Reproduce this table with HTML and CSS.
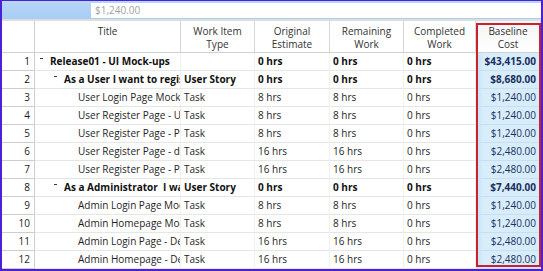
FILE: index.html
```html
<!DOCTYPE html>
<html lang="en">
  <head>
    <meta charset="UTF-8" />
    <title>Baseline Cost</title>
    <link rel="stylesheet" href="styles.css">
  </head>
  <body>
    <div class="sheet">
      <div class="toolbar">
        <div class="formula">$1,240.00</div>
      </div>

      <div class="grid">
        <div class="row head">
          <div class="cell num"></div>
          <div class="cell">Title</div>
          <div class="cell">Work Item<br />Type</div>
          <div class="cell">Original<br />Estimate</div>
          <div class="cell">Remaining<br />Work</div>
          <div class="cell">Completed<br />Work</div>
          <div class="cell cost">Baseline<br />Cost</div>
        </div>

        <div class="row bold">
          <div class="cell num">1</div>
          <div class="cell title lvl1"><span class="toggle"></span>Release01 - UI Mock-ups</div>
          <div class="cell"></div>
          <div class="cell">0 hrs</div>
          <div class="cell">0 hrs</div>
          <div class="cell">0 hrs</div>
          <div class="cell cost">$43,415.00</div>
        </div>
        <div class="row bold">
          <div class="cell num">2</div>
          <div class="cell title lvl2"><span class="toggle"></span>As a User I want to register</div>
          <div class="cell">User Story</div>
          <div class="cell">0 hrs</div>
          <div class="cell">0 hrs</div>
          <div class="cell">0 hrs</div>
          <div class="cell cost">$8,680.00</div>
        </div>
        <div class="row">
          <div class="cell num">3</div>
          <div class="cell title lvl3">User Login Page Mock-up</div>
          <div class="cell">Task</div>
          <div class="cell">8 hrs</div>
          <div class="cell">8 hrs</div>
          <div class="cell">0 hrs</div>
          <div class="cell cost">$1,240.00</div>
        </div>
        <div class="row">
          <div class="cell num">4</div>
          <div class="cell title lvl3">User Register Page - User form</div>
          <div class="cell">Task</div>
          <div class="cell">8 hrs</div>
          <div class="cell">8 hrs</div>
          <div class="cell">0 hrs</div>
          <div class="cell cost">$1,240.00</div>
        </div>
        <div class="row">
          <div class="cell num">5</div>
          <div class="cell title lvl3">User Register Page - Profile</div>
          <div class="cell">Task</div>
          <div class="cell">8 hrs</div>
          <div class="cell">8 hrs</div>
          <div class="cell">0 hrs</div>
          <div class="cell cost">$1,240.00</div>
        </div>
        <div class="row">
          <div class="cell num">6</div>
          <div class="cell title lvl3">User Register Page - data</div>
          <div class="cell">Task</div>
          <div class="cell">16 hrs</div>
          <div class="cell">16 hrs</div>
          <div class="cell">0 hrs</div>
          <div class="cell cost">$2,480.00</div>
        </div>
        <div class="row">
          <div class="cell num">7</div>
          <div class="cell title lvl3">User Register Page - Preview</div>
          <div class="cell">Task</div>
          <div class="cell">16 hrs</div>
          <div class="cell">16 hrs</div>
          <div class="cell">0 hrs</div>
          <div class="cell cost">$2,480.00</div>
        </div>
        <div class="row bold">
          <div class="cell num">8</div>
          <div class="cell title lvl2"><span class="toggle"></span>As a Administrator&nbsp; I want</div>
          <div class="cell">User Story</div>
          <div class="cell">0 hrs</div>
          <div class="cell">0 hrs</div>
          <div class="cell">0 hrs</div>
          <div class="cell cost">$7,440.00</div>
        </div>
        <div class="row">
          <div class="cell num">9</div>
          <div class="cell title lvl3">Admin Login Page Mock-up</div>
          <div class="cell">Task</div>
          <div class="cell">8 hrs</div>
          <div class="cell">8 hrs</div>
          <div class="cell">0 hrs</div>
          <div class="cell cost">$1,240.00</div>
        </div>
        <div class="row">
          <div class="cell num">10</div>
          <div class="cell title lvl3">Admin Homepage Mock-up</div>
          <div class="cell">Task</div>
          <div class="cell">8 hrs</div>
          <div class="cell">8 hrs</div>
          <div class="cell">0 hrs</div>
          <div class="cell cost">$1,240.00</div>
        </div>
        <div class="row">
          <div class="cell num">11</div>
          <div class="cell title lvl3">Admin Login Page - Design</div>
          <div class="cell">Task</div>
          <div class="cell">16 hrs</div>
          <div class="cell">16 hrs</div>
          <div class="cell">0 hrs</div>
          <div class="cell cost">$2,480.00</div>
        </div>
        <div class="row">
          <div class="cell num">12</div>
          <div class="cell title lvl3">Admin Homepage - Design</div>
          <div class="cell">Task</div>
          <div class="cell">16 hrs</div>
          <div class="cell">16 hrs</div>
          <div class="cell">0 hrs</div>
          <div class="cell cost">$2,480.00</div>
        </div>

        <!-- red highlight round the Baseline Cost column -->
        <div class="highlight"></div>
      </div>
    </div>
  </body>
</html>
```

FILE: styles.css
```css
body {
  margin: 0;
  font-family: "Open Sans", "DejaVu Sans", sans-serif;
  font-size: 10px;
  color: #1e1e1e;
  background: #ffffff;
}

.sheet {
  width: 543px;
  height: 271px;
  box-sizing: border-box;
  border: 2px solid #4a22d6;
  border-top-width: 1px;
  overflow: hidden;
  display: flex;
  flex-direction: column;
}

.toolbar {
  height: 18px;
  background: linear-gradient(#b7d6f7, #a8ccf4);
  border-bottom: 2px solid #dedede;
  display: flex;
  align-items: center;
  padding-left: 89px;
}

.formula {
  flex-grow: 1;
  height: 15px;
  margin-top: 1px;
  background: #ffffff;
  color: #a2a2a2;
  line-height: 15px;
  padding-left: 4px;
}

.grid {
  position: relative;
  flex-grow: 1;
}

.row {
  display: grid;
  grid-template-columns: 33px 146px 74px 75px 74px 72px 65px;
  height: 18px;
}

.cell {
  box-sizing: border-box;
  border-bottom: 1px solid #e6e6e6;
  border-right: 1px solid #f1f1f1;
  line-height: 17px;
  padding-left: 3px;
  white-space: nowrap;
  overflow: hidden;
}

.row.bold {
  font-weight: 700;
  color: #111;
}

.cell.num {
  text-align: right;
  padding: 0 4px 0 0;
  border-right: 1px solid #cfcfcf;
  border-bottom-color: #cdcdcd;
  font-weight: 400;
}

.title {
  position: relative;
}

.lvl1 {
  padding-left: 15px;
}

.lvl2 {
  padding-left: 29px;
}

.lvl3 {
  padding-left: 43px;
}

.toggle {
  position: absolute;
  top: 5px;
  width: 3px;
  height: 1px;
  background: #333;
}

.lvl1 .toggle {
  left: 5px;
}

.lvl2 .toggle {
  left: 19px;
}

.cell.cost {
  text-align: right;
  padding: 0 4px 0 0;
  color: #1b2f5c;
  background: linear-gradient(to right, #c3e0f6, #d9eefc 12%, #d6ecfb);
  border-bottom-color: #c9dff0;
}

.row.head {
  height: 32px;
}

.head .cell {
  text-align: center;
  line-height: 13px;
  padding: 4px 0 0;
  color: #333;
  font-weight: 400;
  border-right: 1px solid #d8d8d8;
  border-bottom: 1px solid #d0d0d0;
  white-space: normal;
}

.head .cell.num {
  border-right-color: #d0d0d0;
}

.head .cell.cost {
  background: linear-gradient(#f4f4f4, #ffffff);
  color: #333;
}

.highlight {
  position: absolute;
  top: 2px;
  right: 0;
  bottom: 2px;
  width: 65px;
  box-sizing: border-box;
  border: 2px solid #c8232c;
  pointer-events: none;
}
```
